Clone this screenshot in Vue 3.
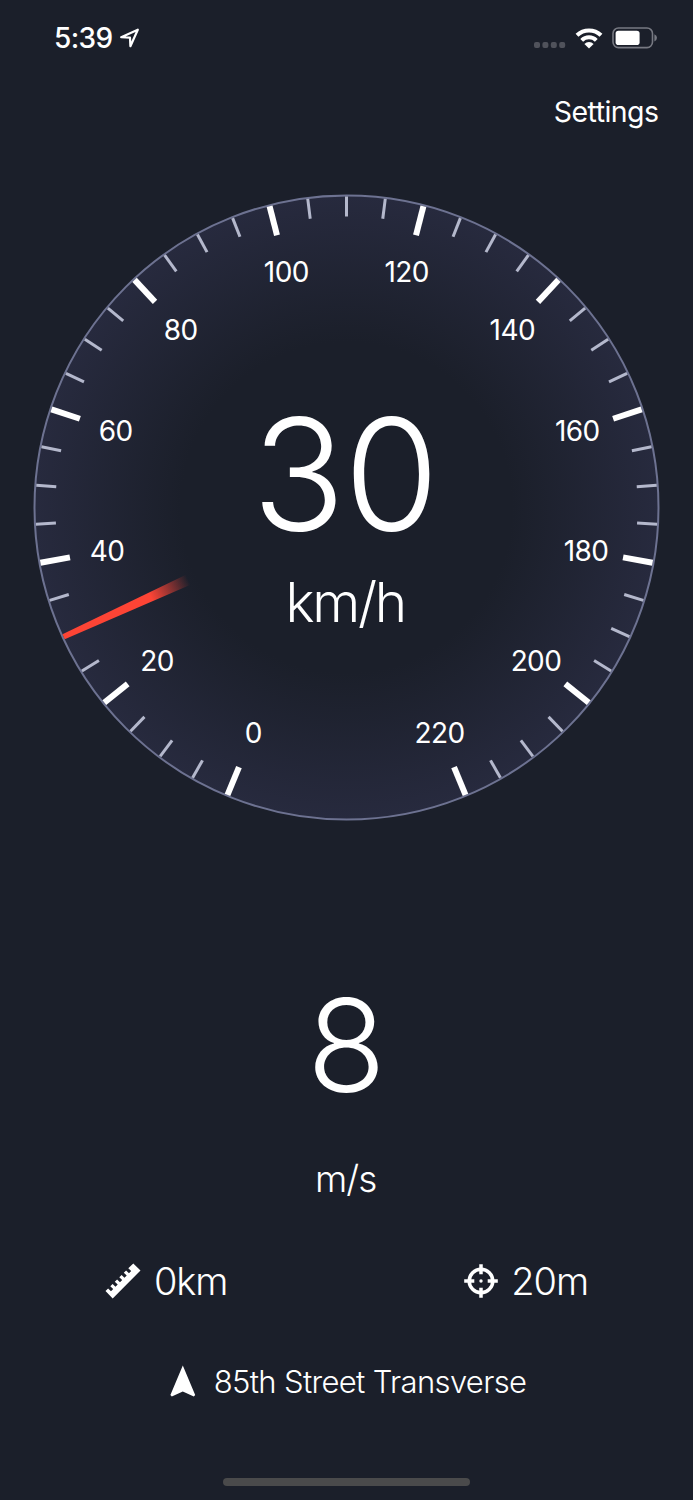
<script setup>
const CENTER = 313.5
const RADIUS = 312
const STEP = 315 / 44

function polar(speed, r) {
  const a = (((speed - 110) / 5) * STEP * Math.PI) / 180
  return { x: CENTER + r * Math.sin(a), y: CENTER - r * Math.cos(a) }
}

const ticks = Array.from({ length: 45 }, (_, i) => {
  const speed = i * 5
  const major = speed % 20 === 0
  const a = polar(speed, RADIUS - 1)
  const b = polar(speed, major ? 281 : 291)
  return { speed, major, x1: a.x, y1: a.y, x2: b.x, y2: b.y }
}).filter((t) => t.speed !== 30)

const labels = Array.from({ length: 12 }, (_, i) => ({
  value: i * 20,
  ...polar(i * 20, 243.3),
}))

const needleAngle = ((30 - 110) / 5) * STEP
</script>

<template>
  <main class="screen">
    <header class="status">
      <div class="clock">
        <span class="time">5:39</span>
        <svg class="location" width="20" height="20" viewBox="0 0 20 20">
          <path d="M1.2 9.2 L17.8 1.7 L10.4 18.2 L10 9.7 Z" fill="none" stroke="#fff" stroke-width="2.2" stroke-linejoin="round" />
        </svg>
      </div>
      <div class="indicators">
        <svg class="signal" width="32" height="6" viewBox="0 0 32 6">
          <rect v-for="n in 4" :key="n" :x="(n - 1) * 8.4" y="0" width="6" height="6" rx="2" fill="#50525b" />
        </svg>
        <svg class="wifi" width="28" height="21" viewBox="0 0 28 21">
          <g fill="none" stroke="#fff" stroke-width="4">
            <path d="M2 7.3 A17.2 17.2 0 0 1 26 7.3" />
            <path d="M6.7 12.3 A10.4 10.4 0 0 1 21.3 12.3" />
          </g>
          <path d="M14 20.6 L9.4 16 A6.3 6.3 0 0 1 18.6 16 Z" fill="#fff" />
        </svg>
        <svg class="battery" width="46" height="22" viewBox="0 0 46 22">
          <rect x="1" y="1" width="39.5" height="19.6" rx="5.5" fill="none" stroke="#777982" stroke-width="1.6" />
          <rect x="3.6" y="3.7" width="24" height="14.3" rx="2.8" fill="#fff" />
          <path d="M42.4 7.3 Q45 8.3 45 10.8 Q45 13.3 42.4 14.4 Z" fill="#777982" />
        </svg>
      </div>
    </header>

    <nav class="toolbar"><span class="settings">Settings</span></nav>

    <section class="gauge">
      <svg width="627" height="627" viewBox="0 0 627 627">
        <defs>
          <radialGradient id="dial">
            <stop offset="0.53" stop-color="#1b1f2a" />
            <stop offset="1" stop-color="#272a3e" />
          </radialGradient>
          <linearGradient id="needle" x1="0" y1="1" x2="0" y2="0">
            <stop offset="0" stop-color="#fd4435" stop-opacity="0" />
            <stop offset="0.3" stop-color="#fd4435" />
          </linearGradient>
        </defs>
        <circle :cx="CENTER" :cy="CENTER" :r="RADIUS" fill="url(#dial)" stroke="#6d7291" stroke-width="2" />
        <line
          v-for="t in ticks"
          :key="t.speed"
          :x1="t.x1"
          :y1="t.y1"
          :x2="t.x2"
          :y2="t.y2"
          :class="t.major ? 'major' : 'minor'"
        />
        <path
          d="M310.8 2.5 H316.2 L319 139.5 H308 Z"
          fill="url(#needle)"
          :transform="`rotate(${needleAngle} ${CENTER} ${CENTER})`"
        />
        <text v-for="l in labels" :key="l.value" class="label" :x="l.x" :y="l.y + 10.6">{{ l.value }}</text>
        <text class="speed" x="311.8" y="335.5">30</text>
        <text class="unit" x="312.2" y="427.5">km/h</text>
      </svg>
    </section>

    <section class="secondary">
      <div class="value">8</div>
      <div class="value-unit">m/s</div>
    </section>

    <section class="stats">
      <div class="stat">
        <svg width="36" height="36" viewBox="0 0 36 36">
          <path
            d="M0.5 28 L3.1 25.4 L6 28.3 L8.2 26.1 L5.3 23.2 L7.6 20.9 L10.5 23.8 L12.7 21.6 L9.8 18.7 L12.1 16.4 L15 19.3 L17.2 17.1 L14.3 14.2 L16.6 11.9 L19.5 14.8 L21.7 12.6 L18.8 9.7 L21.1 7.4 L24 10.3 L26.2 8.1 L23.3 5.2 L28.3 0.4 L35.5 7.6 L7.7 35.4 Z"
            fill="#fff"
          />
        </svg>
        <span>0km</span>
      </div>
      <div class="stat">
        <svg width="34" height="34" viewBox="0 0 34 34">
          <g fill="none" stroke="#fff" stroke-width="3.5">
            <circle cx="17" cy="17" r="11.8" />
            <path d="M17 0.2 V10.3 M17 23.7 V33.8 M0.2 17 H10.3 M23.7 17 H33.8" />
          </g>
          <circle cx="17" cy="17" r="1.7" fill="#fff" />
        </svg>
        <span>20m</span>
      </div>
    </section>

    <section class="place">
      <svg width="26" height="32" viewBox="0 0 26 32">
        <path d="M12.8 0.4 L25.2 30 L23.8 31.4 L12.8 26.5 L1.8 31.4 L0.4 30 Z" fill="#fff" />
      </svg>
      <span>85th Street Transverse</span>
    </section>

    <footer class="home"><div class="bar"></div></footer>
  </main>
</template>

<style>
html,
body {
  margin: 0;
  background: #1b1f2a;
}
</style>

<style scoped>
.screen {
  width: 693px;
  height: 1500px;
  display: flex;
  flex-direction: column;
  background: #1b1f2a;
  color: #fff;
  font-family: Inter, "Liberation Sans", sans-serif;
  overflow: hidden;
}
.status {
  height: 76px;
  flex: none;
  display: flex;
  justify-content: space-between;
  align-items: center;
  padding: 0 35.5px 0 54px;
  box-sizing: border-box;
}
.clock {
  display: flex;
  align-items: center;
  gap: 7px;
}
.time {
  font-size: 28px;
  font-weight: 500;
  line-height: 32px;
  letter-spacing: -0.6px;
}
.indicators {
  display: flex;
  align-items: center;
}
.signal {
  margin: 13px 9px 0 0;
}
.wifi {
  margin-right: 9px;
}
.toolbar {
  height: 72px;
  margin-bottom: -2px;
  flex: none;
  display: flex;
  justify-content: flex-end;
  align-items: center;
  padding-right: 34.5px;
}
.settings {
  font-size: 28.5px;
  line-height: 34px;
  letter-spacing: -0.55px;
}
.gauge {
  flex: none;
  margin: 48px 33px 0;
  height: 627px;
}
.gauge svg {
  display: block;
}
.major {
  stroke: #fff;
  stroke-width: 6;
}
.minor {
  stroke: #b4b8cc;
  stroke-width: 3;
}
text {
  fill: #fff;
  text-anchor: middle;
}
.label {
  font-size: 28px;
  font-weight: 400;
  letter-spacing: -0.6px;
}
.speed {
  font-size: 154px;
  font-weight: 300;
  letter-spacing: -1.4px;
}
.unit {
  font-size: 55px;
  font-weight: 300;
  letter-spacing: -2.3px;
}
.secondary {
  flex: none;
  display: flex;
  flex-direction: column;
  align-items: center;
  margin-top: 159px;
}
.value {
  height: 130px;
  line-height: 131px;
  font-size: 129px;
  font-weight: 300;
}
.value-unit {
  margin-top: 45px;
  height: 48px;
  line-height: 48px;
  font-size: 37px;
  font-weight: 300;
  letter-spacing: -0.9px;
  padding-right: 1.5px;
}
.stats {
  flex: none;
  margin-top: 53px;
  height: 50px;
  padding: 0 105px;
  display: flex;
  justify-content: space-between;
}
.stat {
  display: flex;
  align-items: center;
  gap: 13px;
  font-size: 38px;
  font-weight: 300;
  letter-spacing: -1.1px;
}
.place {
  flex: none;
  margin-top: 51px;
  padding-left: 3px;
  height: 48px;
  display: flex;
  align-items: center;
  justify-content: center;
  gap: 18px;
  font-size: 31px;
  font-weight: 300;
  letter-spacing: -0.65px;
}
.home {
  margin-top: auto;
  height: 22px;
  display: flex;
  justify-content: center;
}
.bar {
  width: 247px;
  height: 8px;
  border-radius: 4px;
  background: #4a4a4b;
}
</style>
